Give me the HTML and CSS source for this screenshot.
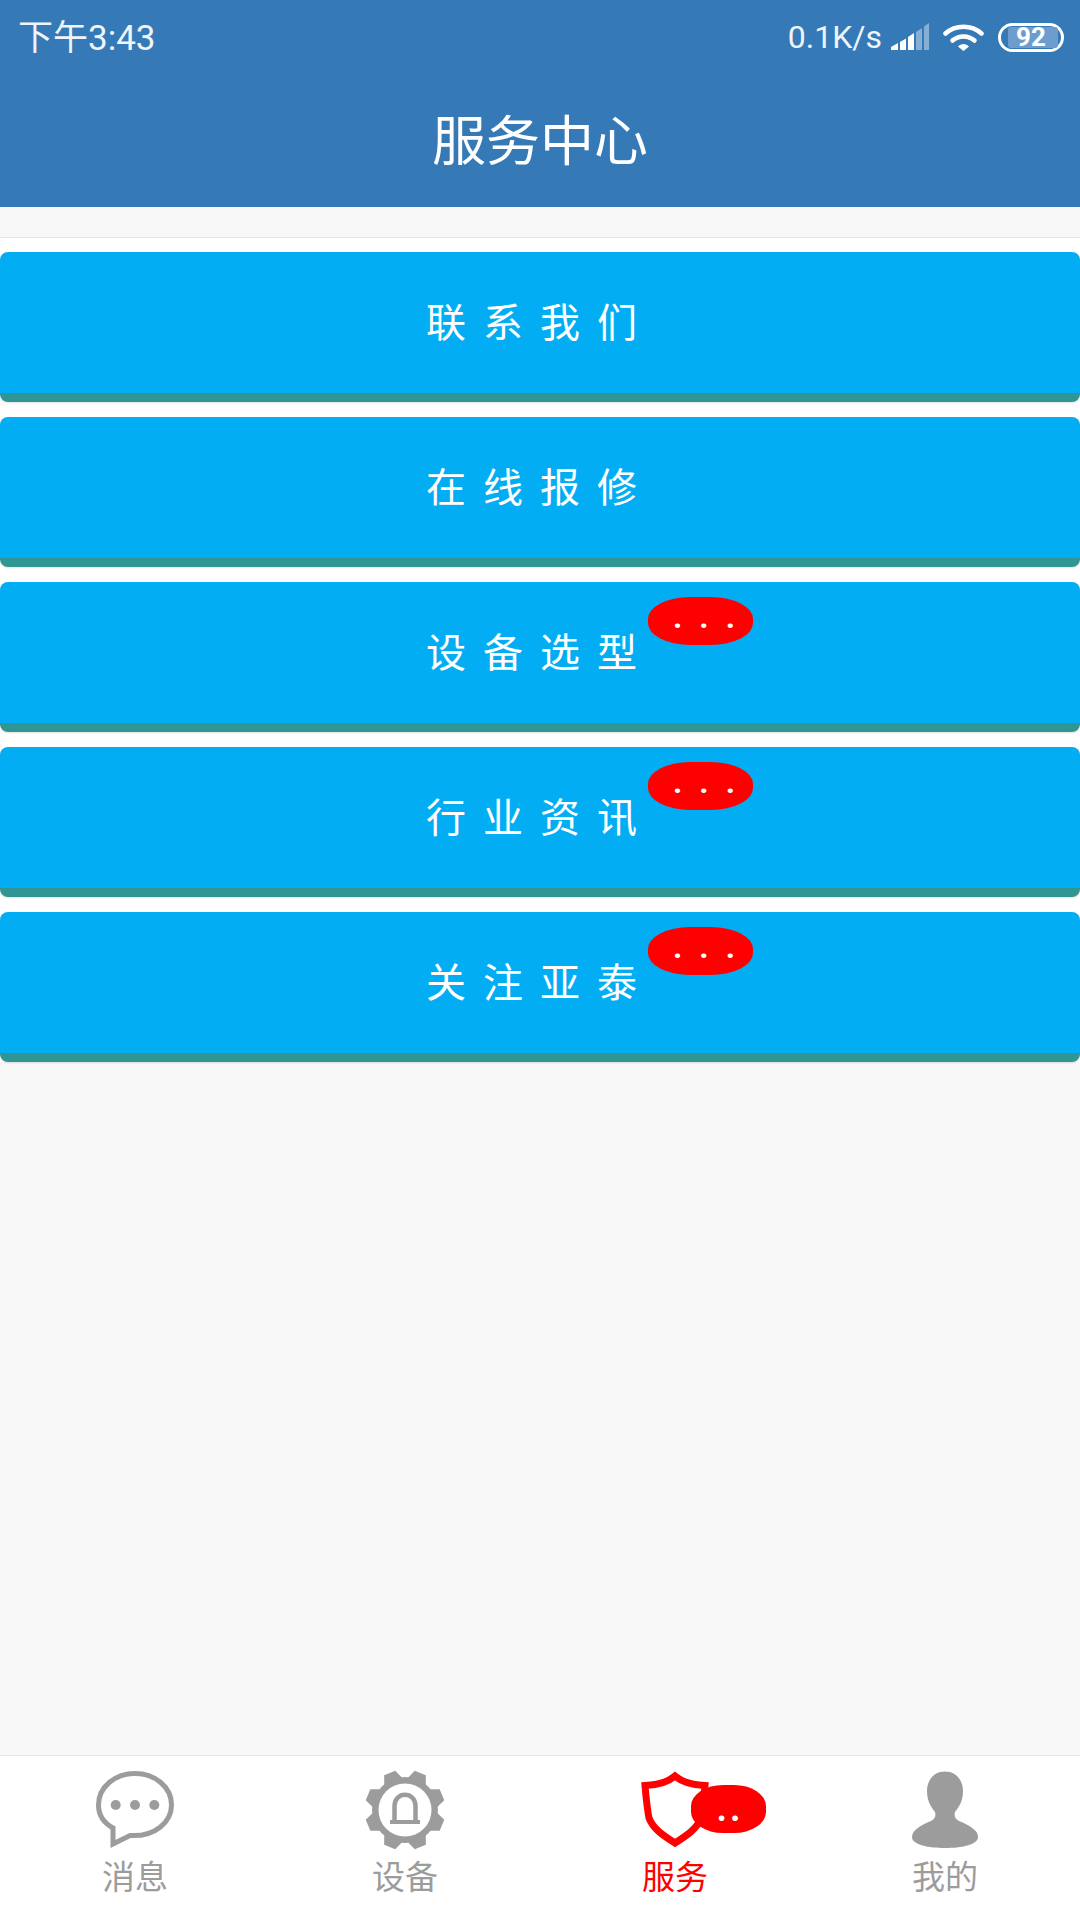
FILE: index.html
```html
<!DOCTYPE html>
<html lang="zh-CN">
<head>
    <meta charset="UTF-8">
    <meta name="viewport" content="width=device-width, initial-scale=1.0">
    <title>服务中心</title>
    <link rel="stylesheet" href="styles.css">
</head>
<body>
    <header class="header">
        <div class="status-bar">
            <span class="status-time">下午3:43</span>
            <div class="status-right">
                <span class="status-speed">0.1K/s</span>
                <svg class="signal" width="39" height="27" viewBox="0 0 39 27">
                    <path d="M1 27V24L8 20V27Z" fill="#fff"/>
                    <path d="M10 27V19L16 15.5V27Z" fill="#fff"/>
                    <path d="M18 27V14L24 10V27Z" fill="#fff"/>
                    <path d="M26 27V9L32 5V27Z" fill="#fff" opacity="0.4"/>
                    <path d="M34 27V3.5L39 0V27Z" fill="#fff" opacity="0.4"/>
                </svg>
                <svg class="wifi" width="41" height="28" viewBox="0 0 41 28">
                    <path d="M2.5 10.5C12.5 1.5 28.5 1.5 38.5 10.5" fill="none" stroke="#fff" stroke-width="4.5" stroke-linecap="round"/>
                    <path d="M9.5 17.5C15.5 12 25.5 12 31.5 17.5" fill="none" stroke="#fff" stroke-width="4.5" stroke-linecap="round"/>
                    <path d="M15 23.5L20.5 28L26 23.5C23 20 18 20 15 23.5Z" fill="#fff"/>
                </svg>
                <div class="battery">
                    <div class="battery-level"></div>
                    <span class="battery-text">92</span>
                </div>
            </div>
        </div>
        <h1 class="title">服务中心</h1>
    </header>

    <div class="strip"></div>

    <main class="menu">
        <a class="menu-item"><span class="menu-text">联系我们</span></a>
        <a class="menu-item"><span class="menu-text">在线报修</span></a>
        <a class="menu-item"><span class="menu-text">设备选型</span><span class="badge">...</span></a>
        <a class="menu-item"><span class="menu-text">行业资讯</span><span class="badge">...</span></a>
        <a class="menu-item"><span class="menu-text">关注亚泰</span><span class="badge">...</span></a>
    </main>

    <div class="filler"></div>

    <nav class="tabbar">
        <div class="tab">
            <svg width="80" height="80" viewBox="0 0 80 80">
                <path d="M40 3.5C20 3.5 3.5 17 3.5 35C3.5 46 9 53 18 58L18 74L35 65.5C60 67 76.5 52 76.5 35C76.5 17 60 3.5 40 3.5Z" fill="none" stroke="#9c9c9c" stroke-width="5"/>
                <circle cx="20.7" cy="35" r="5" fill="#9c9c9c"/>
                <circle cx="40" cy="35" r="5" fill="#9c9c9c"/>
                <circle cx="59.3" cy="35" r="5" fill="#9c9c9c"/>
            </svg>
            <span class="tab-label">消息</span>
        </div>
        <div class="tab">
            <svg width="80" height="80" viewBox="0 0 80 80">
                <g transform="translate(40 40)" fill="#9c9c9c">
                    <circle r="33"/>
                    <path transform="rotate(22.5)" d="M-10 -30L-6 -40H6L10 -30Z"/>
                    <path transform="rotate(67.5)" d="M-10 -30L-6 -40H6L10 -30Z"/>
                    <path transform="rotate(112.5)" d="M-10 -30L-6 -40H6L10 -30Z"/>
                    <path transform="rotate(157.5)" d="M-10 -30L-6 -40H6L10 -30Z"/>
                    <path transform="rotate(202.5)" d="M-10 -30L-6 -40H6L10 -30Z"/>
                    <path transform="rotate(247.5)" d="M-10 -30L-6 -40H6L10 -30Z"/>
                    <path transform="rotate(292.5)" d="M-10 -30L-6 -40H6L10 -30Z"/>
                    <path transform="rotate(337.5)" d="M-10 -30L-6 -40H6L10 -30Z"/>
                    <circle r="26.5" fill="#fff"/>
                </g>
                <path d="M29.5 51V36C29.5 21 50.5 21 50.5 36V51" fill="none" stroke="#9c9c9c" stroke-width="4.5"/>
                <rect x="25" y="50" width="30" height="4" fill="#9c9c9c"/>
            </svg>
            <span class="tab-label">设备</span>
        </div>
        <div class="tab tab-active">
            <svg width="80" height="80" viewBox="0 0 80 80">
                <path d="M40 6C33 12 22 15 10 15.5C11 27 12 38 14 48C18 59 29 66 40 73C51 66 62 59 66 48C68 38 69 27 70 15.5C58 15 47 12 40 6Z" fill="none" stroke="#ff0000" stroke-width="7"/>
            </svg>
            <span class="tab-label">服务</span>
            <span class="badge badge-tab">..</span>
        </div>
        <div class="tab">
            <svg width="80" height="80" viewBox="0 0 80 80">
                <path d="M40 1.5C29 1.5 22 10 22 21C22 31 26 37 30 42C31 46 30 49 26 51C16 55 7 60 7 67C7 75 24 78 40 78C56 78 73 75 73 67C73 60 64 55 54 51C50 49 49 46 50 42C54 37 58 31 58 21C58 10 51 1.5 40 1.5Z" fill="#9c9c9c"/>
            </svg>
            <span class="tab-label">我的</span>
        </div>
    </nav>
</body>
</html>
```

FILE: styles.css
```css
* {
    box-sizing: border-box;
}
body {
    margin: 0;
    height: 1920px;
    display: flex;
    flex-direction: column;
    font-family: Roboto, "Noto Sans CJK SC", sans-serif;
    background-color: #f8f8f8;
}
.header {
    height: 207px;
    background-color: #357ab7;
    color: #fff;
    flex-shrink: 0;
}
.status-bar {
    height: 74px;
    padding: 0 16px 0 18px;
    display: flex;
    justify-content: space-between;
    align-items: center;
    color: #eef4fa;
}
.status-time {
    font-size: 35px;
    position: relative;
    top: -3px;
}
.status-right {
    display: flex;
    align-items: center;
}
.status-speed {
    font-size: 32px;
    margin-right: 8px;
}
.signal {
    margin-right: 14px;
    margin-bottom: 2px;
}
.wifi {
    margin-right: 14px;
}
.battery {
    position: relative;
    width: 66px;
    height: 29px;
    border: 3px solid #fff;
    border-radius: 15px;
    display: flex;
    align-items: center;
    justify-content: center;
}
.battery-level {
    position: absolute;
    left: 7px;
    top: 1px;
    bottom: 1px;
    width: 50px;
    background-color: #6d9dcd;
    border-radius: 3px;
}
.battery-text {
    position: relative;
    font-size: 26px;
    font-weight: 700;
    color: #fff;
}
.title {
    margin: 0;
    height: 133px;
    padding-top: 14px;
    font-size: 54px;
    font-weight: 400;
    line-height: 110px;
    text-align: center;
}
.strip {
    height: 31px;
    border-bottom: 1px solid #e6e6e6;
    flex-shrink: 0;
}
.menu {
    background-color: #fff;
    padding-top: 14px;
    display: flex;
    flex-direction: column;
    gap: 15px;
    flex-shrink: 0;
}
.menu-item {
    position: relative;
    height: 150px;
    background-color: #03adf4;
    border-bottom: 9px solid #2f9694;
    border-radius: 8px;
    box-shadow: 0 1px 2px rgba(0, 0, 0, 0.12);
    display: flex;
    align-items: center;
    justify-content: center;
}
.menu-text {
    font-size: 40px;
    letter-spacing: 17px;
    color: #fff;
    position: relative;
    top: -3px;
}
.badge {
    position: absolute;
    left: 648px;
    top: 15px;
    width: 105px;
    height: 48px;
    border-radius: 42px / 22px;
    background-color: #ff0000;
    color: #fff;
    font-size: 32px;
    font-weight: 700;
    line-height: 40px;
    text-align: center;
    letter-spacing: 17px;
    padding-left: 24px;
}
.filler {
    flex: 1;
}
.tabbar {
    height: 165px;
    background-color: #fff;
    border-top: 1px solid #e6e6e6;
    display: flex;
    flex-shrink: 0;
}
.tab {
    position: relative;
    flex: 1;
    display: flex;
    flex-direction: column;
    align-items: center;
    padding-top: 14px;
}
.tab-label {
    font-size: 33px;
    line-height: 38px;
    margin-top: 9px;
    color: #9c9c9c;
}
.tab-active .tab-label {
    color: #ff0000;
}
.badge-tab {
    left: 151px;
    top: 29px;
    width: 75px;
    border-radius: 32px / 21px;
    font-size: 36px;
    line-height: 48px;
    letter-spacing: 3px;
    padding-left: 3px;
}
```
